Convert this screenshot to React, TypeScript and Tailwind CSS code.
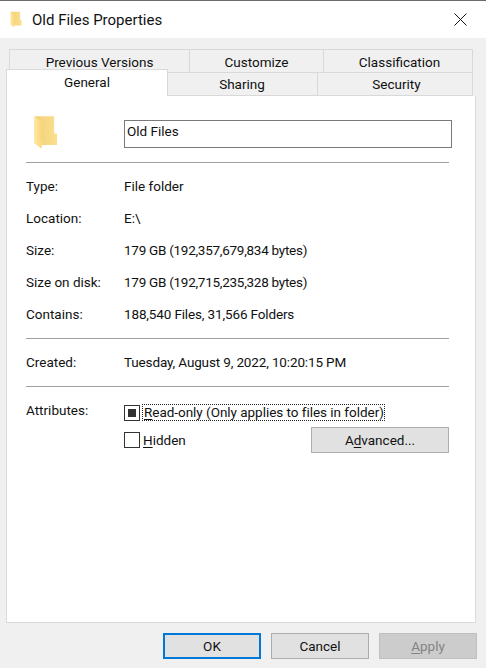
const font = "font-['Roboto',sans-serif]";

function FolderIcon({ className }: { className: string }) {
  return (
    <svg viewBox="0 0 26 36" className={className}>
      <defs>
        <linearGradient id="folderBack" x1="0" y1="0" x2="1" y2="0">
          <stop offset="0" stopColor="#f2cf78" />
          <stop offset="1" stopColor="#fbe08e" />
        </linearGradient>
        <linearGradient id="folderFront" x1="0" y1="0" x2="1" y2="0">
          <stop offset="0" stopColor="#ffeaa8" />
          <stop offset="1" stopColor="#f8d679" />
        </linearGradient>
      </defs>
      <path d="M2 1 H22 V19 H25 V31 H9 V28 L2 22 Z" fill="url(#folderBack)" />
      <path d="M1 1 L9 7 V35 L1 29 Z" fill="url(#folderFront)" />
    </svg>
  );
}

function Tab({ label, width }: { label: string; width: string }) {
  return (
    <div className={`${width} flex h-full items-center justify-center border-t border-r border-[#d9d9d9] pt-[2px] first:border-l`}>
      {label}
    </div>
  );
}

function Row({ label, value, tracking }: { label: string; value: string; tracking?: string }) {
  return (
    <div className="flex h-8 items-center">
      <div className="w-[98px] shrink-0">{label}</div>
      <div className={tracking}>{value}</div>
    </div>
  );
}

function Separator() {
  return <div className="h-px w-[423px] bg-[#a0a0a0]" />;
}

function Check({ checked }: { checked?: boolean }) {
  return (
    <div className="flex h-4 w-4 shrink-0 items-center justify-center border border-[#333333] bg-white">
      {checked && <div className="h-2 w-2 bg-[#333333]" />}
    </div>
  );
}

function Button({ children, className }: { children: React.ReactNode; className: string }) {
  return <div className={`flex h-[26px] items-center justify-center ${className}`}>{children}</div>;
}

export default function App() {
  return (
    <div className={`${font} flex h-[668px] w-[486px] flex-col overflow-hidden bg-[#f0f0f0] text-[13.5px] text-[#111111]`}>
      <div className="flex h-[38px] shrink-0 items-center border-t border-[#6b6b6b] bg-white pl-2.5 pr-[19px]">
        <FolderIcon className="h-[17px] w-3" />
        <div className="ml-2.5 flex-1 pt-px text-[15px]">Old Files Properties</div>
        <svg viewBox="0 0 13 13" className="h-[13px] w-[13px]">
          <path d="M0.5 0.5 L12.5 12.5 M12.5 0.5 L0.5 12.5" stroke="#111111" strokeWidth="1" fill="none" />
        </svg>
      </div>

      <div className="ml-[9px] mt-[11px] flex h-[23px] w-[464px] shrink-0">
        <Tab label="Previous Versions" width="w-[181px]" />
        <Tab label="Customize" width="w-[134px]" />
        <Tab label="Classification" width="w-[149px] pl-[3px]" />
      </div>

      <div className="relative ml-[9px] flex h-6 w-[464px] shrink-0 border-b border-[#d9d9d9]">
        <div className="w-[158px]" />
        <div className="flex w-[151px] items-center justify-center border-t border-r border-[#d9d9d9] pt-px">Sharing</div>
        <div className="flex flex-1 items-center justify-center border-t border-r border-[#d9d9d9] pl-[3px] pt-px">Security</div>
        <div className="absolute -left-[3px] -top-[3px] flex h-[27px] w-[162px] items-center justify-center border-l border-r border-t border-[#d9d9d9] bg-white pb-[2px]">
          General
        </div>
      </div>

      <div className="ml-1.5 h-[527px] w-[470px] shrink-0 border-b border-l border-r border-[#d9d9d9] bg-white pl-[19px] pt-[19px]">
        <div className="flex h-[35px] items-start">
          <FolderIcon className="ml-[7px] h-[35px] w-[25px] shrink-0" />
          <div className="ml-[66px] mt-[5px] flex h-7 w-[328px] items-start border border-[#7a7a7a] pl-[2px]">Old Files</div>
        </div>
        <div className="mt-3">
          <Separator />
        </div>
        <div className="mt-[7px]">
          <Row label="Type:" value="File folder" />
          <Row label="Location:" value="E:\" />
          <Row label="Size:" value="179 GB (192,357,679,834 bytes)" tracking="tracking-[-0.27px]" />
          <Row label="Size on disk:" value="179 GB (192,715,235,328 bytes)" tracking="tracking-[-0.27px]" />
          <Row label="Contains:" value="188,540 Files, 31,566 Folders" tracking="tracking-[-0.14px]" />
        </div>
        <div className="mt-2">
          <Separator />
        </div>
        <div className="mt-[7px]">
          <Row label="Created:" value="Tuesday, August 9, 2022, 10:20:15 PM" tracking="tracking-[-0.14px]" />
        </div>
        <div className="mt-2">
          <Separator />
        </div>
        <div className="mt-[17px] flex">
          <div className="-mt-[2px] w-[98px] shrink-0 leading-4">Attributes:</div>
          <div>
            <div className="flex h-[17px] items-center">
              <Check checked />
              <div className="ml-[2px] border border-dotted border-[#222222] pl-px leading-[15px] tracking-[-0.03px]">
                <u className="underline-offset-2">R</u>ead-only (Only applies to files in folder)
              </div>
            </div>
            <div className="mt-[6px] flex h-[26px] w-[325px] items-center">
              <Check />
              <div className="ml-[2px] flex-1 pl-px">
                <u className="underline-offset-2">H</u>idden
              </div>
              <Button className="w-[138px] border border-[#adadad] bg-[#e1e1e1]">
                <span>A<u className="underline-offset-2">d</u>vanced...</span>
              </Button>
            </div>
          </div>
        </div>
      </div>

      <div className="ml-[163px] mt-[10px] flex gap-2.5">
        <Button className="w-[98px] border-2 border-[#0078d7] bg-[#e1e1e1]">OK</Button>
        <Button className="w-[98px] border border-[#adadad] bg-[#e1e1e1]">Cancel</Button>
        <Button className="w-[98px] border border-[#bfbfbf] bg-[#cccccc] text-[#838383]">
          <span><u className="underline-offset-2">A</u>pply</span>
        </Button>
      </div>
    </div>
  );
}
